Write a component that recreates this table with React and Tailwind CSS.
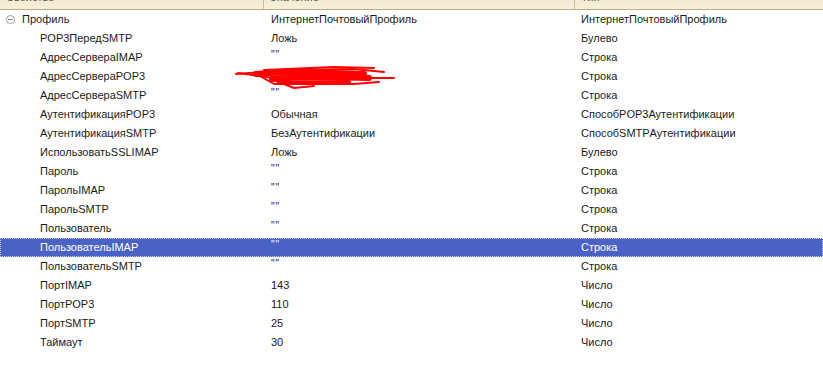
const rows = [
	["POP3ПередSMTP", "Ложь", "Булево"],
	["АдресСервераIMAP", '""', "Строка"],
	["АдресСервераPOP3", "", "Строка"],
	["АдресСервераSMTP", '""', "Строка"],
	["АутентификацияPOP3", "Обычная", "СпособPOP3Аутентификации"],
	["АутентификацияSMTP", "БезАутентификации", "СпособSMTPАутентификации"],
	["ИспользоватьSSLIMAP", "Ложь", "Булево"],
	["Пароль", '""', "Строка"],
	["ПарольIMAP", '""', "Строка"],
	["ПарольSMTP", '""', "Строка"],
	["Пользователь", '""', "Строка"],
	["ПользовательIMAP", '""', "Строка", true],
	["ПользовательSMTP", '""', "Строка"],
	["ПортIMAP", "143", "Число"],
	["ПортPOP3", "110", "Число"],
	["ПортSMTP", "25", "Число"],
	["Таймаут", "30", "Число"],
];

const Row = ({ name, value, type, selected, indent = true, icon }) => (
	<div
		className={
			"flex h-[19px] items-center " +
			(selected ? "bg-[#4a62c6] text-white outline-1 outline-dotted outline-[#c8cff0] -outline-offset-1" : "text-[#1a1a1a]")
		}>
		<div className={"w-[264px] flex items-center " + (indent ? "pl-[40px]" : "pl-[6px]")}>
			{icon}
			{name}
		</div>
		<div className={"w-[311px] pl-[7px] " + (value === '""' ? "tracking-[1px] pt-[2px] self-start text-[10px]" : "")}>{value}</div>
		<div className="flex-1 pl-[6px]">{type}</div>
	</div>
);

const Scribble = () => (
	<svg className="absolute left-[234px] top-[64px]" width="170" height="28" viewBox="0 0 170 28">
		<g fill="none" stroke="#ff0000" strokeLinecap="round" strokeLinejoin="round">
			<path d="M2 10 L60 6 L120 5 L150 8" strokeWidth="2" />
			<path d="M30 6 L100 3 L140 4" strokeWidth="2" />
			<path d="M4 9 L40 14 L160 14" strokeWidth="2" />
			<path d="M26 12 L40 20 L120 20 L145 18" strokeWidth="2" />
			<path d="M40 16 L60 24 L80 22" strokeWidth="2" />
			<path d="M22 10 C40 8 90 8 130 10" strokeWidth="6" />
			<path d="M38 15 C60 13 100 13 135 14" strokeWidth="6" />
			<path d="M45 19 C70 18 90 18 115 18" strokeWidth="4" />
		</g>
	</svg>
);

export default function App() {
	return (
		<div className="w-[823px] h-[380px] bg-white overflow-hidden relative text-[11px] leading-none" style={{ fontFamily: '"Liberation Sans", Arial, sans-serif' }}>
			<div className="h-[10px] bg-gradient-to-b from-[#f2ead0] to-[#f7f0da] border-b border-[#b7ab88] flex text-[#555] overflow-hidden">
				<div className="w-[264px] border-r border-[#c9bd98] pl-[6px] -mt-[8px]">Свойство</div>
				<div className="w-[311px] border-r border-[#c9bd98] pl-[6px] -mt-[8px]">Значение</div>
				<div className="flex-1 pl-[6px] -mt-[8px]">Тип</div>
			</div>
			<Row
				name="Профиль"
				value="ИнтернетПочтовыйПрофиль"
				type="ИнтернетПочтовыйПрофиль"
				indent={false}
				icon={
					<span className="w-[9px] h-[9px] rounded-full border border-[#a0a0a0] mr-[7px] flex items-center justify-center">
						<span className="w-[5px] h-px bg-[#808080]" />
					</span>
				}
			/>
			{rows.map(([n, v, t, s]) => (
				<Row key={n} name={n} value={v} type={t} selected={s} />
			))}
			<Scribble />
		</div>
	);
}
